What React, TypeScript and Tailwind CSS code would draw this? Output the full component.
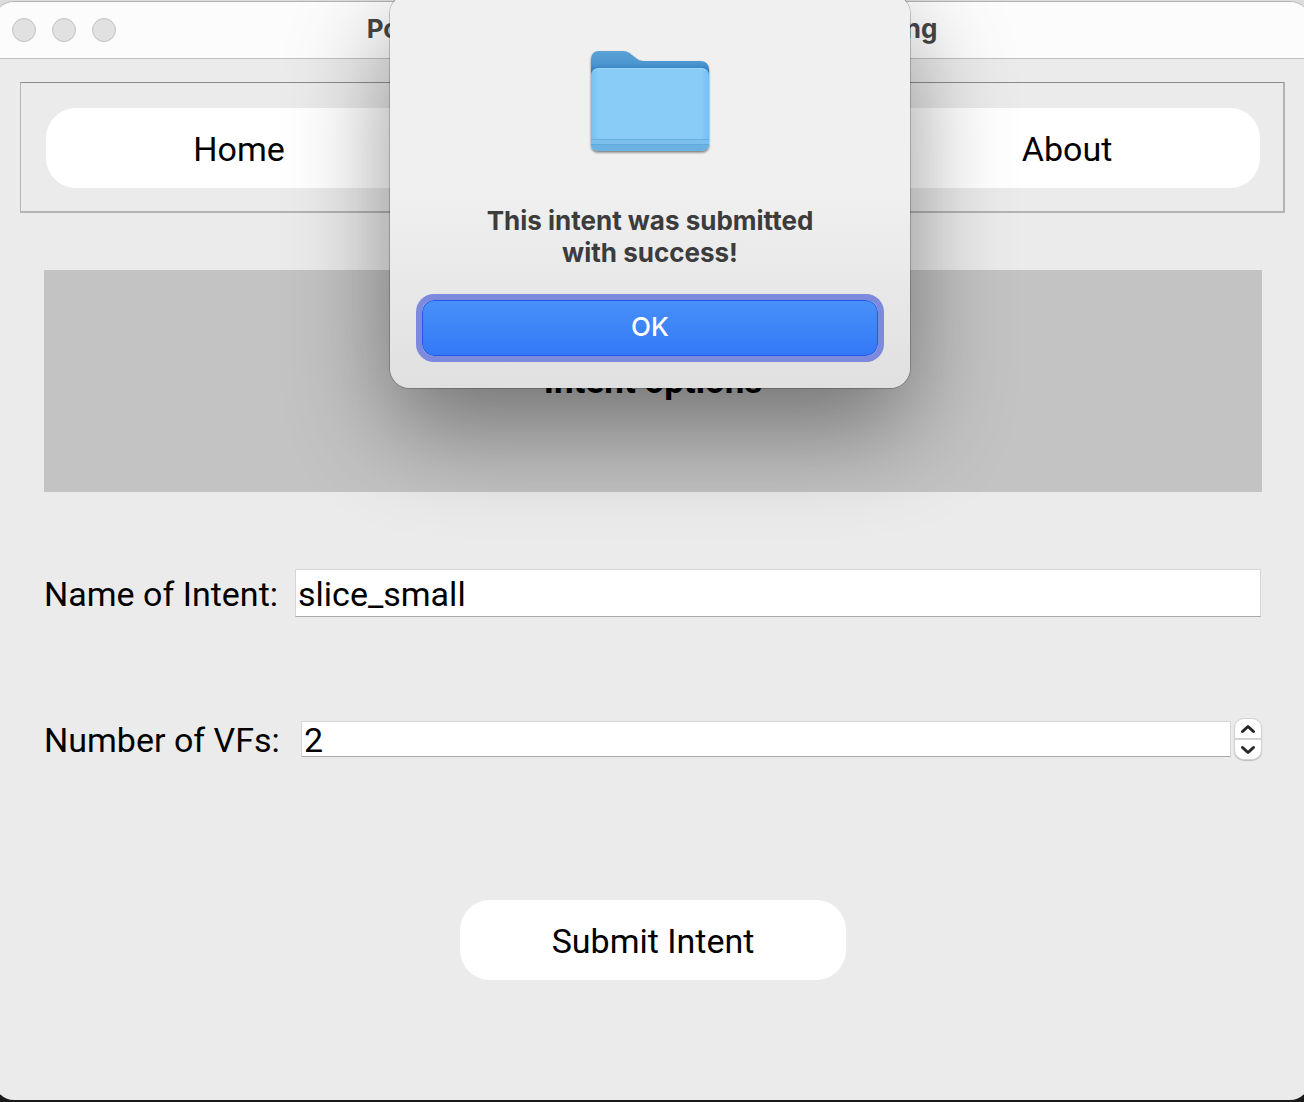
import { useState } from 'react';

function FolderIcon() {
  return (
    <svg width="128" height="112" viewBox="0 0 128 112" aria-hidden="true" className="block">
      <defs>
        <linearGradient id="back" x1="0" y1="0" x2="0" y2="1">
          <stop offset="0" stopColor="#5ba3d6" />
          <stop offset="0.13" stopColor="#4b95cf" />
          <stop offset="0.2" stopColor="#2f7cc4" />
          <stop offset="1" stopColor="#2f7cc4" />
        </linearGradient>
        <linearGradient id="front" x1="0" y1="0" x2="1" y2="0">
          <stop offset="0" stopColor="#78bfee" />
          <stop offset="0.07" stopColor="#88ccf7" />
          <stop offset="0.93" stopColor="#88ccf7" />
          <stop offset="1" stopColor="#78bfee" />
        </linearGradient>
        <filter id="drop" x="-10%" y="-10%" width="120%" height="125%">
          <feDropShadow dx="0" dy="1.5" stdDeviation="1.2" floodColor="#000" floodOpacity="0.5" />
        </filter>
      </defs>
      <g filter="url(#drop)">
        <path
          d="M5 14 Q5 5 13 5 H37 Q42 5 46 9 L50 12 Q53 15 58 15 H114 Q123 15 123 24 V97 Q123 105 115 105 H13 Q5 105 5 97 Z"
          fill="url(#back)"
        />
        <path d="M5 30 Q5 22 13 22 H115 Q123 22 123 30 V97 Q123 105 115 105 H13 Q5 105 5 97 Z" fill="url(#front)" />
      </g>
      <path d="M8 25 Q10 22.5 13 22.5 H115 Q118 22.5 120 25" fill="none" stroke="#9ad6fa" strokeWidth="1" />
      <path d="M5 93 H123 V97 Q123 105 115 105 H13 Q5 105 5 97 Z" fill="#7cc1ee" />
      <path d="M5 93.500 H123" stroke="#66b0e0" strokeWidth="1" />
      <path d="M5.500 98.500 H122.500 Q122 105 115 105 H13 Q6 105 5.500 98.500 Z" fill="#6ab2e2" />
      <path d="M5 98.500 H123" stroke="#60a9db" strokeWidth="1" />
    </svg>
  );
}

function Chevron({ up }: { up?: boolean }) {
  return (
    <svg width="16" height="10" viewBox="0 0 16 10" aria-hidden="true">
      <path
        d={up ? 'M2.500 7.500 L8 2.500 L13.500 7.500' : 'M2.500 2.500 L8 7.500 L13.500 2.500'}
        fill="none"
        stroke="#262626"
        strokeWidth="3"
        strokeLinecap="round"
        strokeLinejoin="round"
      />
    </svg>
  );
}

const pill = 'h-20 rounded-[30px] bg-white pt-0.5 text-center text-[34px] leading-[44px] text-black';
const label = 'shrink-0 pt-0.5 text-[34px] leading-[44px] whitespace-nowrap text-black';
const field =
  'min-w-0 flex-1 border border-t-[#d6d6d6] border-x-[#d6d6d6] border-b-[#a9a9a9] bg-white px-[2px] pt-0.5 text-[34px] text-black outline-none';

export default function App() {
  const [name, setName] = useState('slice_small');
  const [count, setCount] = useState(2);

  return (
    <div className="relative flex min-h-screen flex-col overflow-hidden bg-[linear-gradient(#dcdcdc_50%,#1a1a1a_50%)] pt-px pb-0.5 font-['Roboto',sans-serif]">
      <main className="-mx-1.5 flex flex-1 flex-col rounded-[20px] border-t border-[#b4b4b4] bg-[#ebebeb] px-[26px]">
        <header className="-mx-[26px] flex h-[57px] shrink-0 items-center rounded-t-[20px] border-b border-[#c0c0c0] bg-[#fcfcfc] px-[18px]">
          <div className="flex flex-1 gap-4">
            <button type="button" aria-label="Close" className="size-6 rounded-full border border-[#c4c4c4] bg-[#e1e1e1]" />
            <button type="button" aria-label="Minimize" className="size-6 rounded-full border border-[#c4c4c4] bg-[#e1e1e1]" />
            <button type="button" aria-label="Zoom" className="size-6 rounded-full border border-[#c4c4c4] bg-[#e1e1e1]" />
          </div>
          <h1 className="pb-1 font-['Inter',sans-serif] text-[26px] font-bold whitespace-nowrap text-[#464646]">
            Portal for Managing Intent Based Networking
          </h1>
          <div className="flex-1" />
        </header>

        <nav className="mt-[23px] mr-[-1px] grid grid-cols-3 gap-7 border-t border-r-2 border-b-2 border-l border-t-[#8c8c8c] border-r-[#b3b5b4] border-b-[#b3b5b4] border-l-[#b3b5b4] pt-[25px] pr-[23px] pb-[23px] pl-[25px]">
          <button type="button" className={pill}>Home</button>
          <button type="button" className={pill}>Intent</button>
          <button type="button" className={pill}>About</button>
        </nav>

        <section className="mx-6 mt-[57px] mr-[22px] flex h-[222px] items-center justify-center bg-[#c3c3c3]">
          <h2 className="pt-0.5 text-[35px] leading-[44px] font-bold text-black">Intent options</h2>
        </section>

        <form className="mx-6 mr-[22px] flex flex-col" onSubmit={(e) => e.preventDefault()}>
          <div className="mt-[77px] flex h-12 items-center">
            <label htmlFor="intent-name" className={`${label} w-[251px]`}>
              Name of Intent:
            </label>
            <input id="intent-name" className={`${field} mr-px h-12`} value={name} onChange={(e) => setName(e.target.value)} />
          </div>

          <div className="mt-[101px] flex h-[42px] items-center">
            <label htmlFor="vf-count" className={`${label} w-[257px]`}>
              Number of VFs:
            </label>
            <input
              id="vf-count"
              inputMode="numeric"
              className={`${field} h-9 leading-[34px]`}
              value={count}
              onChange={(e) => setCount(Number(e.target.value) || 0)}
            />
            <div className="ml-[3px] flex h-[42px] w-7 flex-col overflow-hidden rounded-[10px] border border-[#d2d2d2] bg-white shadow-[0_1px_1px_rgba(0,0,0,0.2)]">
              <button
                type="button"
                aria-label="Increase"
                onClick={() => setCount(count + 1)}
                className="flex flex-1 items-center justify-center border-b-2 border-[#d4d4d4]"
              >
                <Chevron up />
              </button>
              <button
                type="button"
                aria-label="Decrease"
                onClick={() => setCount(count - 1)}
                className="flex flex-1 items-center justify-center"
              >
                <Chevron />
              </button>
            </div>
          </div>

          <button type="submit" className={`${pill} mt-[140px] w-[386px] self-center`}>
            Submit Intent
          </button>
        </form>
      </main>

      <div className="absolute inset-x-0 -top-1.5 flex justify-center pr-1">
        <div
          role="dialog"
          aria-labelledby="message"
          className="flex w-[520px] flex-col items-center rounded-[20px] bg-linear-to-b from-[#f0f0f0] from-50% to-[#e0e0e0] px-8 pt-[52px] pb-8 font-['Inter',sans-serif] shadow-[0_0_0_1px_rgba(0,0,0,0.2),0_40px_100px_rgba(0,0,0,0.42)]"
        >
          <FolderIcon />
          <p id="message" className="mt-[47px] w-[360px] text-center text-[26px] leading-8 font-bold text-[#3c3c3c]">
            This intent was submitted with success!
          </p>
          <button
            type="button"
            className="mt-[31px] h-14 w-full rounded-[12px] border border-[#2657e6] bg-linear-to-b from-[#4890f8] to-[#3478f6] pb-1 text-[26px] font-medium text-white ring-6 ring-[#7d89dc]"
          >
            OK
          </button>
        </div>
      </div>
    </div>
  );
}
